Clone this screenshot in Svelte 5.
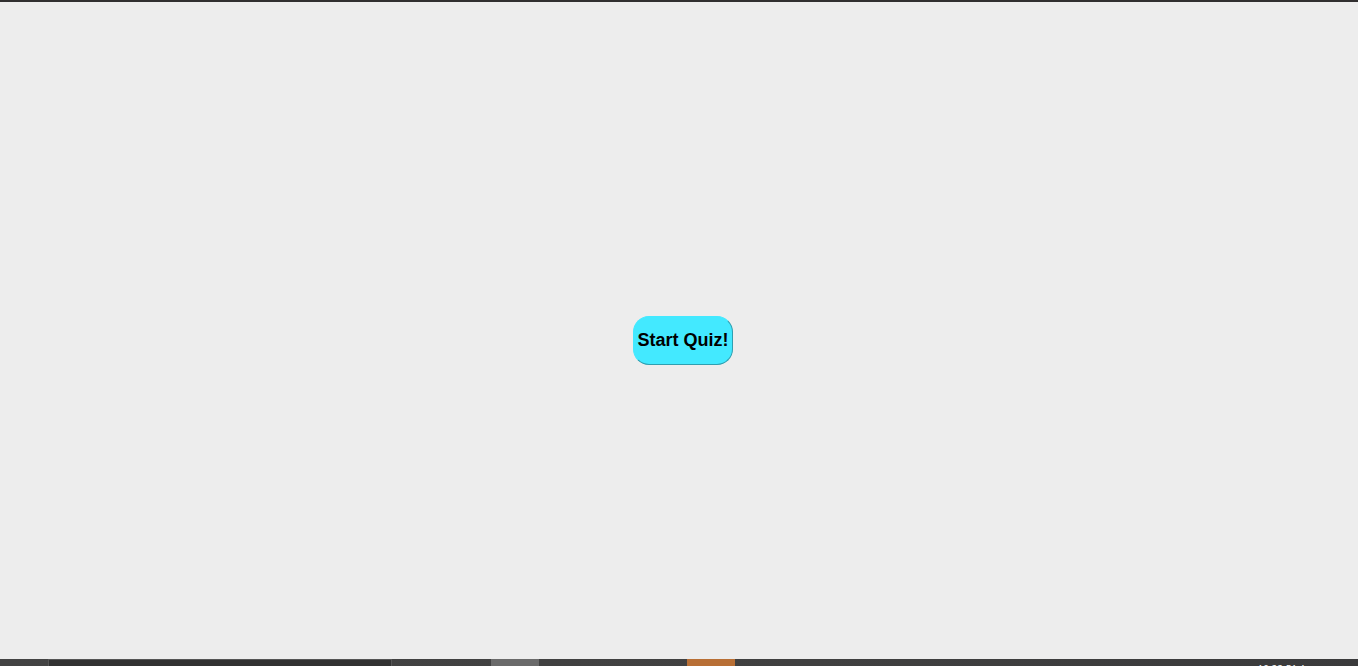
<script>
  let started = $state(false);
</script>

<div class="screen">
  <main>
    <button type="button" aria-pressed={started} onclick={() => (started = true)}>Start Quiz!</button>
  </main>
  <footer>
    <span class="start"></span>
    <span class="search"></span>
    <span class="gap"></span>
    <span class="active"></span>
    <span class="tasks"></span>
    <span class="alert"></span>
    <time>10:22:51 A</time>
  </footer>
</div>

<style>
  :global(body) {
    margin: 0;
    background: #ededed;
  }
  .screen {
    box-sizing: border-box;
    height: 100vh;
    display: flex;
    flex-direction: column;
    overflow: hidden;
    border-top: 2px solid #312f30;
    background: #ededed;
    font-family: "Liberation Sans", Arial, sans-serif;
  }
  main {
    flex: 1;
    display: flex;
    align-items: center;
    justify-content: center;
    padding: 20px 0 0 8px;
  }
  button {
    box-sizing: border-box;
    padding: 13px 3px;
    border: 1px solid;
    border-color: #43e9ff #2f9fb0 #2f9fb0 #43e9ff;
    border-radius: 16px;
    background: #43e9ff;
    color: #000;
    font: bold 18px/21px "Liberation Sans", Arial, sans-serif;
    cursor: pointer;
  }
  footer {
    height: 7px;
    flex: none;
    display: flex;
    overflow: hidden;
    background: linear-gradient(90deg, #434343, #404040 60%, #3a3a3b);
  }
  .start {
    width: 48px;
  }
  .search {
    box-sizing: border-box;
    width: 344px;
    border: 1px solid #555;
    border-bottom: 0;
    background: #323232;
  }
  .gap {
    width: 99px;
  }
  .active {
    width: 48px;
    background: #6a6a6a;
  }
  .tasks {
    width: 148px;
  }
  .alert {
    width: 48px;
    background: #b86f35;
  }
  time {
    margin-left: auto;
    padding: 3px 52px 0 0;
    color: #fff;
    font: 10px/14px "Open Sans", sans-serif;
    white-space: nowrap;
  }
</style>
